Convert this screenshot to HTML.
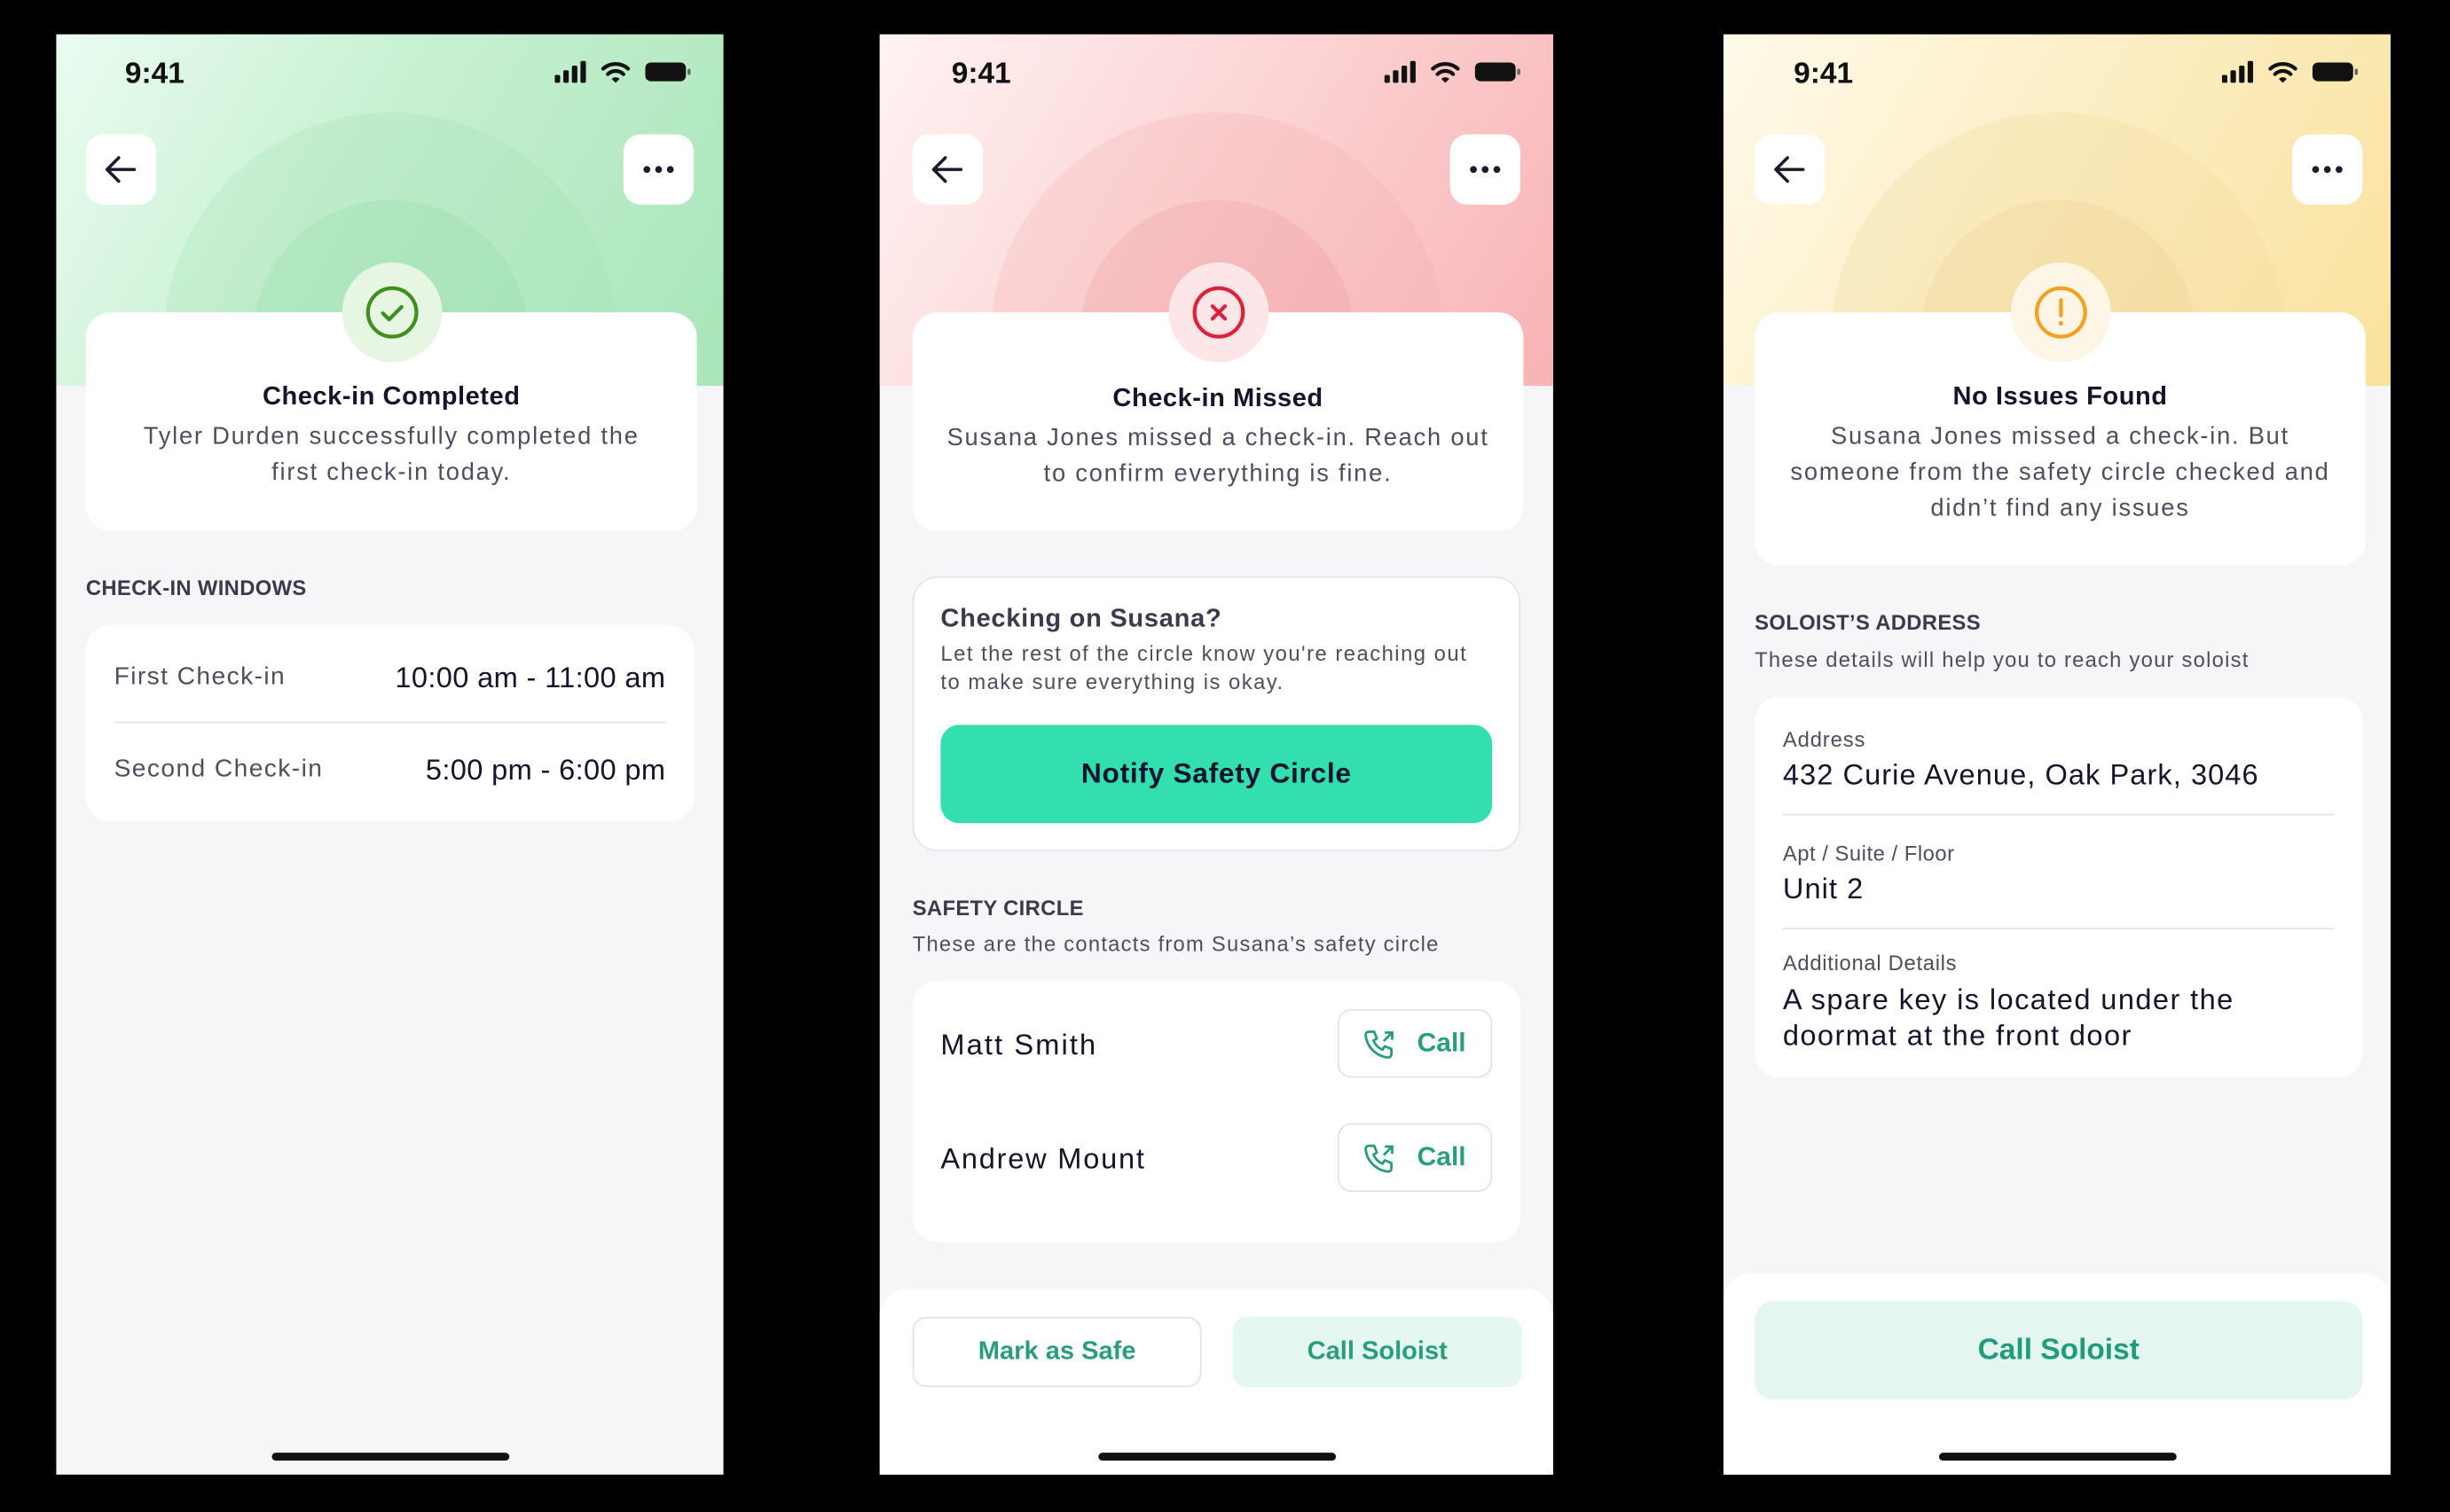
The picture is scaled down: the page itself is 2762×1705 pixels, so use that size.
<!DOCTYPE html>
<html><head><meta charset="utf-8"><style>
*{box-sizing:border-box;margin:0;padding:0}
body{width:2762px;height:1705px;background:#000;overflow:hidden;font-family:"Liberation Sans",sans-serif}
#w{position:absolute;left:0;top:0;width:1568px;height:968px;transform:scale(1.76148);transform-origin:0 0}
.ph{position:absolute;top:22px;height:922px;background:#f6f6f8;overflow:hidden}
.hd{position:absolute;left:0;top:0;right:0;height:225px;overflow:hidden}
.c1,.c2{position:absolute;border-radius:50%;left:50%}
.c1{width:290px;height:290px;margin-left:-145px;top:50px}
.c2{width:176px;height:176px;margin-left:-88px;top:106px}
.t{position:absolute;left:44px;top:15px;font-size:19px;font-weight:bold;color:#111}
.sb{position:absolute;right:20px;top:16px}
.btn{position:absolute;top:64px;width:45px;height:45px;background:#fff;border-radius:11px}
.card{position:absolute;background:#fff;border-radius:16px}
.ic{position:absolute;width:64px;height:64px;border-radius:50%;margin-left:-32px;top:146px}
.ti{position:absolute;left:0;right:0;text-align:center;font-size:16.5px;font-weight:bold;color:#14142b;letter-spacing:.3px}
.tx{position:absolute;left:0;right:0;text-align:center;font-size:15.5px;line-height:23px;color:#4e4e5e;letter-spacing:1px}
.lab{position:absolute;font-size:13.5px;font-weight:bold;color:#3a3a4c;letter-spacing:.2px}
.sub{position:absolute;font-size:13.5px;color:#4e4e5e;letter-spacing:.7px}
.home{position:absolute;bottom:9px;left:50%;width:152px;margin-left:-76px;height:5px;border-radius:3px;background:#111}
.abs{position:absolute}
.ls{letter-spacing:.8px}
</style></head><body><div id="w">

<!-- Phone 1 -->
<div class="ph" style="left:36px;width:427px">
 <div class="hd" style="background:linear-gradient(120deg,#eafcf0 0%,#c6f0d2 45%,#a8e5b8 100%)">
  <div class="c1" style="background:rgba(160,225,175,.25)"></div>
  <div class="c2" style="background:rgba(150,220,165,.3)"></div>
 </div>
 <div class="t">9:41</div>
 <svg class="sb" width="88" height="16" viewBox="0 0 88 16"><rect x="0" y="10" width="3.5" height="5" rx="1" fill="#111"/><rect x="5.5" y="7" width="3.5" height="8" rx="1" fill="#111"/><rect x="11" y="4" width="3.5" height="11" rx="1" fill="#111"/><rect x="16.5" y="1" width="3.5" height="14" rx="1" fill="#111"/><path d="M31 6a12 12 0 0 1 16 0M34 9.5a7 7 0 0 1 10 0" stroke="#111" stroke-width="2.4" fill="none" stroke-linecap="round"/><path d="M36.5 12.5l2.5 2.5 2.5-2.5a3.5 3.5 0 0 0-5 0z" fill="#111"/><rect x="58" y="2" width="26" height="12" rx="3.5" fill="#111"/><rect x="85" y="6" width="2" height="4" rx="1" fill="#666"/></svg>
 <div class="btn" style="left:19px"><svg width="45" height="45"><path d="M31 22.5H14M21 15l-7.5 7.5L21 30" stroke="#1a1a2e" stroke-width="2" fill="none" stroke-linecap="round" stroke-linejoin="round"/></svg></div>
 <div class="btn" style="left:363px"><svg width="45" height="45"><circle cx="15" cy="22.5" r="2.2" fill="#1a1a2e"/><circle cx="22.5" cy="22.5" r="2.2" fill="#1a1a2e"/><circle cx="30" cy="22.5" r="2.2" fill="#1a1a2e"/></svg></div>
 <div class="card" style="left:19px;top:178px;width:391px;height:140px">
  <div class="ti" style="top:45px">Check-in Completed</div>
  <div class="tx" style="top:68px">Tyler Durden successfully completed the<br>first check-in today.</div>
 </div>
 <div class="ic" style="left:215px;background:#e6f6e3"><svg width="64" height="64"><circle cx="32" cy="32" r="15.5" stroke="#3f8f1c" stroke-width="2.4" fill="none"/><path d="M26 32.5l4 4 8-8" stroke="#3f8f1c" stroke-width="2.4" fill="none" stroke-linecap="round" stroke-linejoin="round"/></svg></div>
 <div class="lab" style="left:19px;top:347px">CHECK-IN WINDOWS</div>
 <div class="card" style="left:19px;top:378px;width:389px;height:126px">
  <div class="abs ls" style="left:18px;top:25px;font-size:16px;color:#4e4e5e">First Check-in</div>
  <div class="abs" style="right:18px;top:23px;font-size:18.5px;color:#14142b;letter-spacing:.2px">10:00 am - 11:00 am</div>
  <div class="abs" style="left:18px;right:18px;top:62px;height:1px;background:#e3e3e8"></div>
  <div class="abs ls" style="left:18px;top:84px;font-size:16px;color:#4e4e5e">Second Check-in</div>
  <div class="abs" style="right:18px;top:82px;font-size:18.5px;color:#14142b;letter-spacing:.2px">5:00 pm - 6:00 pm</div>
 </div>
 <div class="home"></div>
</div>

<!-- Phone 2 -->
<div class="ph" style="left:563px;width:431px">
 <div class="hd" style="background:linear-gradient(120deg,#fff3f3 0%,#fcd6d7 45%,#f8b3b5 100%)">
  <div class="c1" style="background:rgba(245,170,172,.25)"></div>
  <div class="c2" style="background:rgba(240,160,163,.3)"></div>
 </div>
 <div class="t" style="left:46px">9:41</div>
 <svg class="sb" width="88" height="16" viewBox="0 0 88 16"><rect x="0" y="10" width="3.5" height="5" rx="1" fill="#111"/><rect x="5.5" y="7" width="3.5" height="8" rx="1" fill="#111"/><rect x="11" y="4" width="3.5" height="11" rx="1" fill="#111"/><rect x="16.5" y="1" width="3.5" height="14" rx="1" fill="#111"/><path d="M31 6a12 12 0 0 1 16 0M34 9.5a7 7 0 0 1 10 0" stroke="#111" stroke-width="2.4" fill="none" stroke-linecap="round"/><path d="M36.5 12.5l2.5 2.5 2.5-2.5a3.5 3.5 0 0 0-5 0z" fill="#111"/><rect x="58" y="2" width="26" height="12" rx="3.5" fill="#111"/><rect x="85" y="6" width="2" height="4" rx="1" fill="#666"/></svg>
 <div class="btn" style="left:21px"><svg width="45" height="45"><path d="M31 22.5H14M21 15l-7.5 7.5L21 30" stroke="#1a1a2e" stroke-width="2" fill="none" stroke-linecap="round" stroke-linejoin="round"/></svg></div>
 <div class="btn" style="left:365px"><svg width="45" height="45"><circle cx="15" cy="22.5" r="2.2" fill="#1a1a2e"/><circle cx="22.5" cy="22.5" r="2.2" fill="#1a1a2e"/><circle cx="30" cy="22.5" r="2.2" fill="#1a1a2e"/></svg></div>
 <div class="card" style="left:21px;top:178px;width:391px;height:140px">
  <div class="ti" style="top:46px">Check-in Missed</div>
  <div class="tx" style="top:69px">Susana Jones missed a check-in. Reach out<br>to confirm everything is fine.</div>
 </div>
 <div class="ic" style="left:217px;background:#fde6e7"><svg width="64" height="64"><circle cx="32" cy="32" r="15.5" stroke="#e0203a" stroke-width="2.4" fill="none"/><path d="M28 28l8 8M36 28l-8 8" stroke="#e0203a" stroke-width="2.4" stroke-linecap="round"/></svg></div>
 <div class="card" style="left:21px;top:347px;width:389px;height:176px;border:1.5px solid #e4e4ea">
  <div class="abs" style="left:17px;top:17px;font-size:16.5px;font-weight:bold;color:#3a3a4c;letter-spacing:.4px">Checking on Susana?</div>
  <div class="abs" style="left:17px;top:40px;font-size:13.5px;line-height:18px;color:#4e4e5e;letter-spacing:.85px">Let the rest of the circle know you're reaching out<br>to make sure everything is okay.</div>
  <div class="abs" style="left:17px;top:94px;width:353px;height:63px;border-radius:12px;background:#34dfae;text-align:center;line-height:63px;font-size:18px;font-weight:bold;color:#0e1330;letter-spacing:.4px">Notify Safety Circle</div>
 </div>
 <div class="lab" style="left:21px;top:552px">SAFETY CIRCLE</div>
 <div class="sub" style="left:21px;top:575px">These are the contacts from Susana’s safety circle</div>
 <div class="card" style="left:21px;top:606px;width:389px;height:167px">
  <div class="abs" style="left:18px;top:30px;font-size:18.5px;color:#14142b;letter-spacing:1.2px">Matt Smith</div>
  <div class="abs" style="left:272px;top:18px;width:99px;height:44px;border:1.5px solid #e2e2e8;border-radius:9px"><svg class="abs" style="left:14px;top:10px" width="24" height="24" viewBox="0 0 24 24"><path d="M5 3.5h3.5l1.7 4.3-2.2 1.4a11 11 0 0 0 5.8 5.8l1.4-2.2 4.3 1.7V18a2 2 0 0 1-2 2A16 16 0 0 1 3 5.5a2 2 0 0 1 2-2z" stroke="#2a9d7c" stroke-width="1.6" fill="none" stroke-linejoin="round"/><path d="M15 9l5-5M16 4h4v4" stroke="#2a9d7c" stroke-width="1.6" fill="none" stroke-linecap="round"/></svg><span class="abs" style="left:50px;top:11px;font-size:17px;font-weight:bold;color:#2a9d7c">Call</span></div>
  <div class="abs" style="left:18px;top:103px;font-size:18.5px;color:#14142b;letter-spacing:1px">Andrew Mount</div>
  <div class="abs" style="left:272px;top:91px;width:99px;height:44px;border:1.5px solid #e2e2e8;border-radius:9px"><svg class="abs" style="left:14px;top:10px" width="24" height="24" viewBox="0 0 24 24"><path d="M5 3.5h3.5l1.7 4.3-2.2 1.4a11 11 0 0 0 5.8 5.8l1.4-2.2 4.3 1.7V18a2 2 0 0 1-2 2A16 16 0 0 1 3 5.5a2 2 0 0 1 2-2z" stroke="#2a9d7c" stroke-width="1.6" fill="none" stroke-linejoin="round"/><path d="M15 9l5-5M16 4h4v4" stroke="#2a9d7c" stroke-width="1.6" fill="none" stroke-linecap="round"/></svg><span class="abs" style="left:50px;top:11px;font-size:17px;font-weight:bold;color:#2a9d7c">Call</span></div>
 </div>
 <div class="abs" style="left:0;right:0;top:803px;bottom:0;background:#fff;border-radius:18px 18px 0 0">
  <div class="abs" style="left:21px;top:18px;width:185px;height:45px;border:1.5px solid #e2e2e8;border-radius:9px;text-align:center;line-height:42px;font-size:16.5px;font-weight:bold;color:#2a9d7c">Mark as Safe</div>
  <div class="abs" style="left:226px;top:18px;width:185px;height:45px;background:#e4f8f1;border-radius:9px;text-align:center;line-height:45px;font-size:16.5px;font-weight:bold;color:#2a9d7c">Call Soloist</div>
 </div>
 <div class="home"></div>
</div>

<!-- Phone 3 -->
<div class="ph" style="left:1103px;width:427px">
 <div class="hd" style="background:linear-gradient(120deg,#fffaea 0%,#fcefc6 45%,#f9e29d 100%)">
  <div class="c1" style="background:rgba(240,215,150,.25)"></div>
  <div class="c2" style="background:rgba(235,205,140,.25)"></div>
 </div>
 <div class="t" style="left:45px">9:41</div>
 <svg class="sb" width="88" height="16" viewBox="0 0 88 16"><rect x="0" y="10" width="3.5" height="5" rx="1" fill="#111"/><rect x="5.5" y="7" width="3.5" height="8" rx="1" fill="#111"/><rect x="11" y="4" width="3.5" height="11" rx="1" fill="#111"/><rect x="16.5" y="1" width="3.5" height="14" rx="1" fill="#111"/><path d="M31 6a12 12 0 0 1 16 0M34 9.5a7 7 0 0 1 10 0" stroke="#111" stroke-width="2.4" fill="none" stroke-linecap="round"/><path d="M36.5 12.5l2.5 2.5 2.5-2.5a3.5 3.5 0 0 0-5 0z" fill="#111"/><rect x="58" y="2" width="26" height="12" rx="3.5" fill="#111"/><rect x="85" y="6" width="2" height="4" rx="1" fill="#666"/></svg>
 <div class="btn" style="left:20px"><svg width="45" height="45"><path d="M31 22.5H14M21 15l-7.5 7.5L21 30" stroke="#1a1a2e" stroke-width="2" fill="none" stroke-linecap="round" stroke-linejoin="round"/></svg></div>
 <div class="btn" style="left:364px"><svg width="45" height="45"><circle cx="15" cy="22.5" r="2.2" fill="#1a1a2e"/><circle cx="22.5" cy="22.5" r="2.2" fill="#1a1a2e"/><circle cx="30" cy="22.5" r="2.2" fill="#1a1a2e"/></svg></div>
 <div class="card" style="left:20px;top:178px;width:391px;height:162px">
  <div class="ti" style="top:45px">No Issues Found</div>
  <div class="tx" style="top:68px">Susana Jones missed a check-in. But<br>someone from the safety circle checked and<br>didn’t find any issues</div>
 </div>
 <div class="ic" style="left:216px;background:#fdf6e6"><svg width="64" height="64"><circle cx="32" cy="32" r="15.5" stroke="#f5a020" stroke-width="2.4" fill="none"/><path d="M32 24v10" stroke="#f5a020" stroke-width="2.4" stroke-linecap="round"/><circle cx="32" cy="39" r="1.5" fill="#f5a020"/></svg></div>
 <div class="lab" style="left:20px;top:369px">SOLOIST’S ADDRESS</div>
 <div class="sub" style="left:20px;top:393px">These details will help you to reach your soloist</div>
 <div class="card" style="left:20px;top:424px;width:389px;height:244px">
  <div class="abs" style="left:18px;top:20px;font-size:13.5px;color:#4e4e5e;letter-spacing:.5px">Address</div>
  <div class="abs" style="left:18px;top:39px;font-size:18.5px;color:#14142b;letter-spacing:.6px">432 Curie Avenue, Oak Park, 3046</div>
  <div class="abs" style="left:18px;right:18px;top:75px;height:1px;background:#e3e3e8"></div>
  <div class="abs" style="left:18px;top:93px;font-size:13.5px;color:#4e4e5e;letter-spacing:.3px">Apt / Suite / Floor</div>
  <div class="abs" style="left:18px;top:112px;font-size:18.5px;color:#14142b;letter-spacing:.6px">Unit 2</div>
  <div class="abs" style="left:18px;right:18px;top:148px;height:1px;background:#e3e3e8"></div>
  <div class="abs" style="left:18px;top:163px;font-size:13.5px;color:#4e4e5e;letter-spacing:.4px">Additional Details</div>
  <div class="abs" style="left:18px;top:182px;font-size:18.5px;line-height:23px;color:#14142b;letter-spacing:.8px">A spare key is located under the<br>doormat at the front door</div>
 </div>
 <div class="abs" style="left:0;right:0;top:793px;bottom:0;background:#fff;border-radius:18px 18px 0 0">
  <div class="abs" style="left:20px;top:18px;width:389px;height:63px;background:#e3f7f0;border-radius:12px;text-align:center;line-height:63px;font-size:19px;font-weight:bold;color:#1f9c7c">Call Soloist</div>
 </div>
 <div class="home"></div>
</div>

</div></body></html>
